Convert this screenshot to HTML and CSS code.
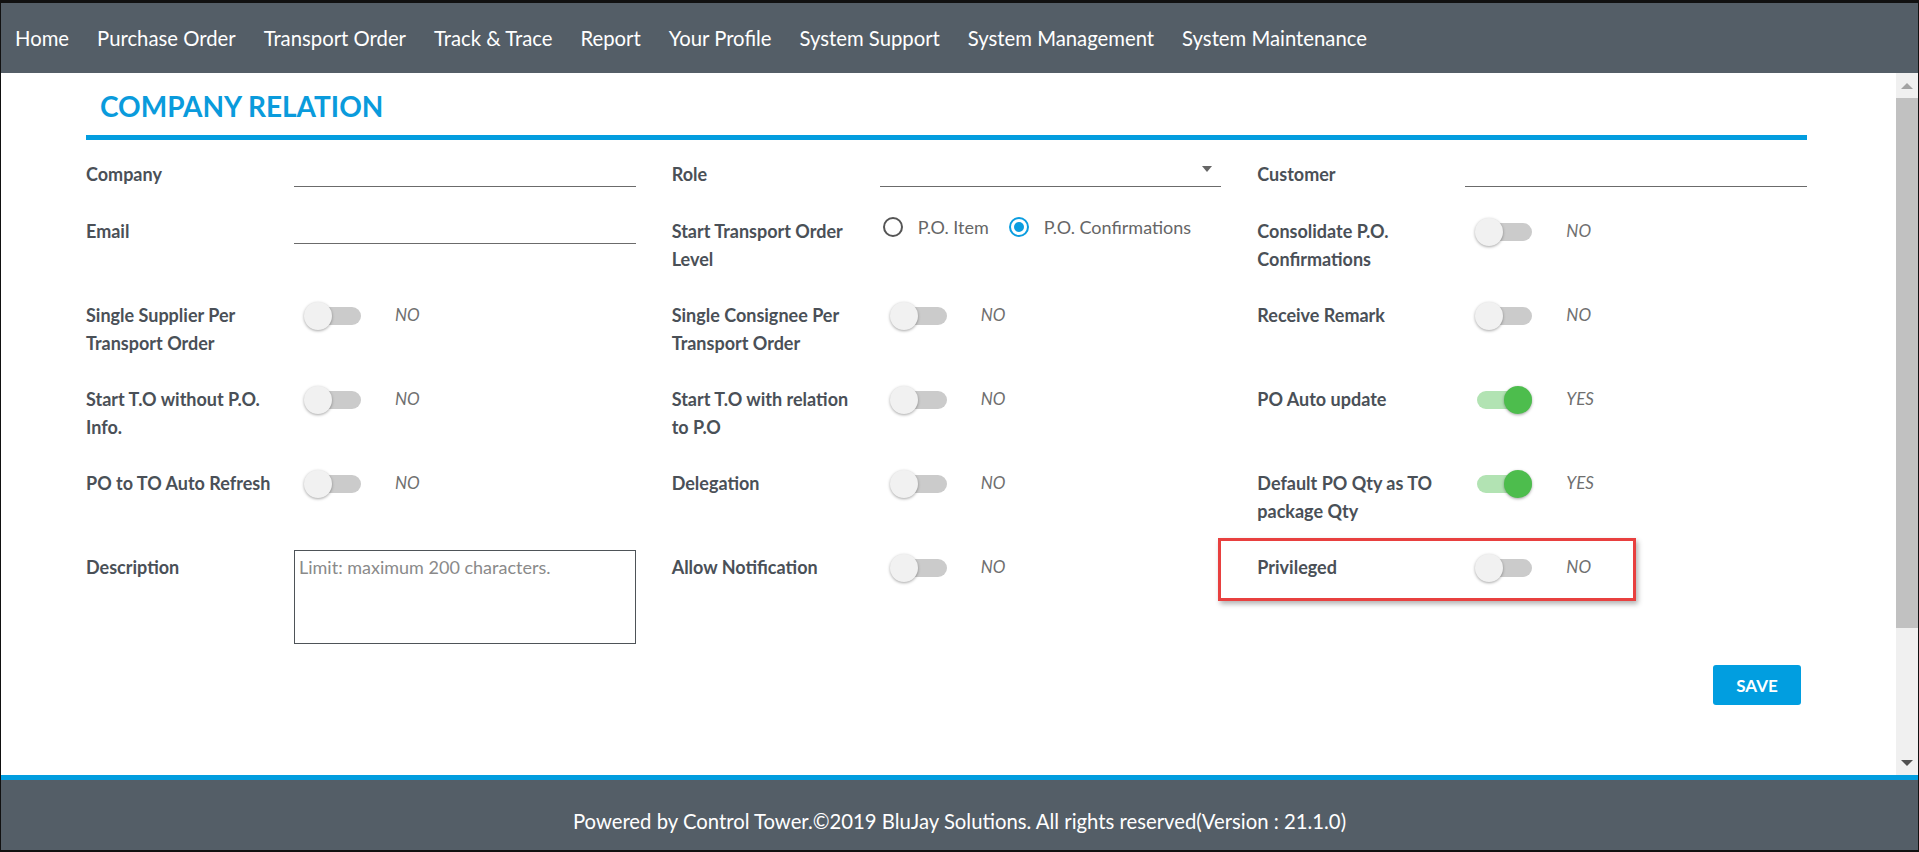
FILE: index.html
```html
<!DOCTYPE html>
<html lang="en">
<head>
<meta charset="utf-8">
<title>Company Relation</title>
<link rel="stylesheet" href="styles.css">
</head>
<body>
<div class="frame">
  <nav class="topnav">
    <a href="#">Home</a>
    <a href="#">Purchase Order</a>
    <a href="#">Transport Order</a>
    <a href="#">Track &amp; Trace</a>
    <a href="#">Report</a>
    <a href="#">Your Profile</a>
    <a href="#">System Support</a>
    <a href="#">System Management</a>
    <a href="#">System Maintenance</a>
  </nav>

  <div class="main">
    <div class="content">
      <div class="container">
        <h1 class="title">COMPANY RELATION</h1>

        <div class="form-grid">
          <!-- Row 1 -->
          <div class="field">
            <label class="lbl">Company</label>
            <div class="ctl"><div class="text-input"></div></div>
          </div>
          <div class="field">
            <label class="lbl">Role</label>
            <div class="ctl"><div class="text-input select"><span class="caret"></span></div></div>
          </div>
          <div class="field">
            <label class="lbl">Customer</label>
            <div class="ctl"><div class="text-input"></div></div>
          </div>

          <!-- Row 2 -->
          <div class="field">
            <label class="lbl">Email</label>
            <div class="ctl"><div class="text-input"></div></div>
          </div>
          <div class="field">
            <label class="lbl">Start Transport Order<br>Level</label>
            <div class="ctl">
              <div class="radios">
                <span class="radio"><span class="dot"></span>P.O. Item</span>
                <span class="radio"><span class="dot checked"></span>P.O. Confirmations</span>
              </div>
            </div>
          </div>
          <div class="field">
            <label class="lbl">Consolidate P.O.<br>Confirmations</label>
            <div class="ctl">
              <div class="sw-row"><span class="switch"><span class="track"></span><span class="knob"></span></span><span class="state">NO</span></div>
            </div>
          </div>

          <!-- Row 3 -->
          <div class="field">
            <label class="lbl">Single Supplier Per<br>Transport Order</label>
            <div class="ctl">
              <div class="sw-row"><span class="switch"><span class="track"></span><span class="knob"></span></span><span class="state">NO</span></div>
            </div>
          </div>
          <div class="field">
            <label class="lbl">Single Consignee Per<br>Transport Order</label>
            <div class="ctl">
              <div class="sw-row"><span class="switch"><span class="track"></span><span class="knob"></span></span><span class="state">NO</span></div>
            </div>
          </div>
          <div class="field">
            <label class="lbl">Receive Remark</label>
            <div class="ctl">
              <div class="sw-row"><span class="switch"><span class="track"></span><span class="knob"></span></span><span class="state">NO</span></div>
            </div>
          </div>

          <!-- Row 4 -->
          <div class="field">
            <label class="lbl">Start T.O without P.O.<br>Info.</label>
            <div class="ctl">
              <div class="sw-row"><span class="switch"><span class="track"></span><span class="knob"></span></span><span class="state">NO</span></div>
            </div>
          </div>
          <div class="field">
            <label class="lbl">Start T.O with relation<br>to P.O</label>
            <div class="ctl">
              <div class="sw-row"><span class="switch"><span class="track"></span><span class="knob"></span></span><span class="state">NO</span></div>
            </div>
          </div>
          <div class="field">
            <label class="lbl">PO Auto update</label>
            <div class="ctl">
              <div class="sw-row"><span class="switch on"><span class="track"></span><span class="knob"></span></span><span class="state">YES</span></div>
            </div>
          </div>

          <!-- Row 5 -->
          <div class="field">
            <label class="lbl">PO to TO Auto Refresh</label>
            <div class="ctl">
              <div class="sw-row"><span class="switch"><span class="track"></span><span class="knob"></span></span><span class="state">NO</span></div>
            </div>
          </div>
          <div class="field">
            <label class="lbl">Delegation</label>
            <div class="ctl">
              <div class="sw-row"><span class="switch"><span class="track"></span><span class="knob"></span></span><span class="state">NO</span></div>
            </div>
          </div>
          <div class="field">
            <label class="lbl">Default PO Qty as TO<br>package Qty</label>
            <div class="ctl">
              <div class="sw-row"><span class="switch on"><span class="track"></span><span class="knob"></span></span><span class="state">YES</span></div>
            </div>
          </div>

          <!-- Row 6 -->
          <div class="field">
            <label class="lbl">Description</label>
            <div class="ctl"><textarea class="textarea" placeholder="Limit: maximum 200 characters."></textarea></div>
          </div>
          <div class="field">
            <label class="lbl">Allow Notification</label>
            <div class="ctl">
              <div class="sw-row"><span class="switch"><span class="track"></span><span class="knob"></span></span><span class="state">NO</span></div>
            </div>
          </div>
          <div class="field">
            <label class="lbl">Privileged</label>
            <div class="ctl">
              <div class="sw-row"><span class="switch"><span class="track"></span><span class="knob"></span></span><span class="state">NO</span></div>
            </div>
            <div class="highlight"></div>
          </div>
        </div>

        <div class="actions">
          <button class="btn-save" type="button">SAVE</button>
        </div>
      </div>
    </div>

    <div class="scrollbar">
      <div class="sb-btn sb-up"></div>
      <div class="sb-thumb"></div>
      <div class="sb-space"></div>
      <div class="sb-btn sb-down"></div>
    </div>
  </div>

  <footer class="footer">Powered by Control Tower.©2019 BluJay Solutions. All rights reserved(Version : 21.1.0)</footer>
</div>
</body>
</html>
```

FILE: styles.css
```css
html, body {
  margin: 0;
  padding: 0;
  background: #fff;
}

body {
  font-family: Lato, "Open Sans", "Liberation Sans", sans-serif;
}

.frame {
  width: 1919px;
  height: 852px;
  box-sizing: border-box;
  border-left: 1px solid #111;
  border-right: 1px solid #111;
  border-top: 3px solid #111;
  border-bottom: 2px solid #111;
  display: flex;
  flex-direction: column;
  overflow: hidden;
  background: #fff;
}

/* Top navigation */
.topnav {
  flex: none;
  height: 70px;
  background: #545e67;
  display: flex;
  align-items: center;
  gap: 28px;
  padding-left: 14px;
}

.topnav a {
  color: #fff;
  text-decoration: none;
  font-size: 20.3px;
  line-height: 70px;
  white-space: nowrap;
}

/* Main area */
.main {
  flex: 1;
  min-height: 0;
  display: flex;
}

.content {
  flex: 1;
  min-width: 0;
  overflow: hidden;
}

.container {
  width: 1721px;
  margin-left: 85px;
}

.title {
  margin: 16px 0 0;
  padding: 0 0 12px 14px;
  font-size: 28px;
  line-height: 34px;
  font-weight: 700;
  color: #0a9bdc;
  border-bottom: 5px solid #039ddf;
}

.form-grid {
  margin-top: 20px;
  display: grid;
  grid-template-columns: repeat(3, 1fr);
  column-gap: 36px;
  row-gap: 28px;
}

.field {
  display: flex;
  align-items: flex-start;
  position: relative;
}

.lbl {
  flex: none;
  width: 208px;
  font-size: 18px;
  line-height: 28px;
  font-weight: 700;
  color: #4a5057;
}

.ctl {
  flex: 1;
  min-width: 0;
}

.text-input {
  height: 27px;
  box-sizing: border-box;
  border-bottom: 1px solid #6b6b6b;
  margin-bottom: 2px;
}

.select {
  display: flex;
  justify-content: flex-end;
  align-items: flex-start;
  padding: 6px 9px 0 0;
}

.caret {
  width: 0;
  height: 0;
  border-left: 5px solid transparent;
  border-right: 5px solid transparent;
  border-top: 6px solid #666;
}

/* Radios */
.radios {
  display: flex;
  align-items: center;
  gap: 20px;
  padding-left: 3px;
}

.radio {
  display: flex;
  align-items: center;
  gap: 15px;
  font-size: 18px;
  line-height: 20px;
  color: #666;
}

.dot {
  flex: none;
  width: 20px;
  height: 20px;
  box-sizing: border-box;
  border: 2px solid #555;
  border-radius: 50%;
  display: flex;
  align-items: center;
  justify-content: center;
}

.dot.checked {
  border-color: #0b9de0;
}

.dot.checked::after {
  content: "";
  width: 10px;
  height: 10px;
  border-radius: 50%;
  background: #0b9de0;
}

/* Switches */
.sw-row {
  display: flex;
  align-items: center;
  height: 28px;
  margin-top: 1px;
  padding-left: 10px;
}

.switch {
  flex: none;
  display: flex;
  align-items: center;
  width: 57px;
  height: 28px;
}

.track {
  flex: none;
  width: 55px;
  height: 18px;
  margin-left: 2px;
  border-radius: 9px;
  background: #cbcbcb;
}

.knob {
  flex: none;
  width: 28px;
  height: 28px;
  border-radius: 50%;
  background: #f1f1f1;
  box-shadow: 0 1px 3px rgba(0, 0, 0, 0.35);
  margin-left: -57px;
}

.switch.on .track {
  background: #b2e3b3;
}

.switch.on .knob {
  background: #4dbd4d;
  margin-left: -28px;
}

.state {
  margin-left: 34px;
  padding-bottom: 3px;
  font-size: 17px;
  font-style: italic;
  color: #6f6f6f;
}

/* Textarea */
.textarea {
  display: block;
  width: 100%;
  height: 94px;
  margin-top: -3px;
  box-sizing: border-box;
  border: 1px solid #4e5358;
  border-radius: 0;
  padding: 5px 4px;
  font-family: Lato, "Open Sans", sans-serif;
  font-size: 18px;
  line-height: 22px;
  resize: none;
  outline: none;
}

.textarea::placeholder {
  color: #8a8a8a;
}

/* Annotation box */
.highlight {
  position: absolute;
  left: -39px;
  top: -15px;
  width: 418px;
  height: 63px;
  box-sizing: border-box;
  border: 3px solid #e8403f;
  box-shadow: 2px 3px 5px rgba(0, 0, 0, 0.3);
  pointer-events: none;
}

/* Actions */
.actions {
  display: flex;
  justify-content: flex-end;
  margin-top: 21px;
  padding-right: 6px;
}

.btn-save {
  width: 88px;
  height: 40px;
  border: 0;
  border-radius: 3px;
  background: #019ee0;
  color: #fff;
  font-family: Lato, "Open Sans", sans-serif;
  font-size: 17px;
  font-weight: 700;
  padding: 0;
}

/* Fake scrollbar */
.scrollbar {
  flex: none;
  width: 22px;
  background: #f0f0f0;
  display: flex;
  flex-direction: column;
}

.sb-btn {
  flex: none;
  height: 25px;
  display: flex;
  align-items: center;
  justify-content: center;
}

.sb-up::after {
  content: "";
  width: 0;
  height: 0;
  border-left: 6px solid transparent;
  border-right: 6px solid transparent;
  border-bottom: 6px solid #a3a3a3;
}

.sb-down::after {
  content: "";
  width: 0;
  height: 0;
  border-left: 6px solid transparent;
  border-right: 6px solid transparent;
  border-top: 6px solid #505050;
}

.sb-thumb {
  flex: none;
  height: 530px;
  background: #c1c1c1;
}

.sb-space {
  flex: 1;
}

/* Footer */
.footer {
  flex: none;
  height: 75px;
  box-sizing: border-box;
  border-top: 5px solid #019ddf;
  background: #545e67;
  color: #fff;
  text-align: center;
  font-size: 20.3px;
  line-height: 24px;
  padding-top: 29px;
}
```
